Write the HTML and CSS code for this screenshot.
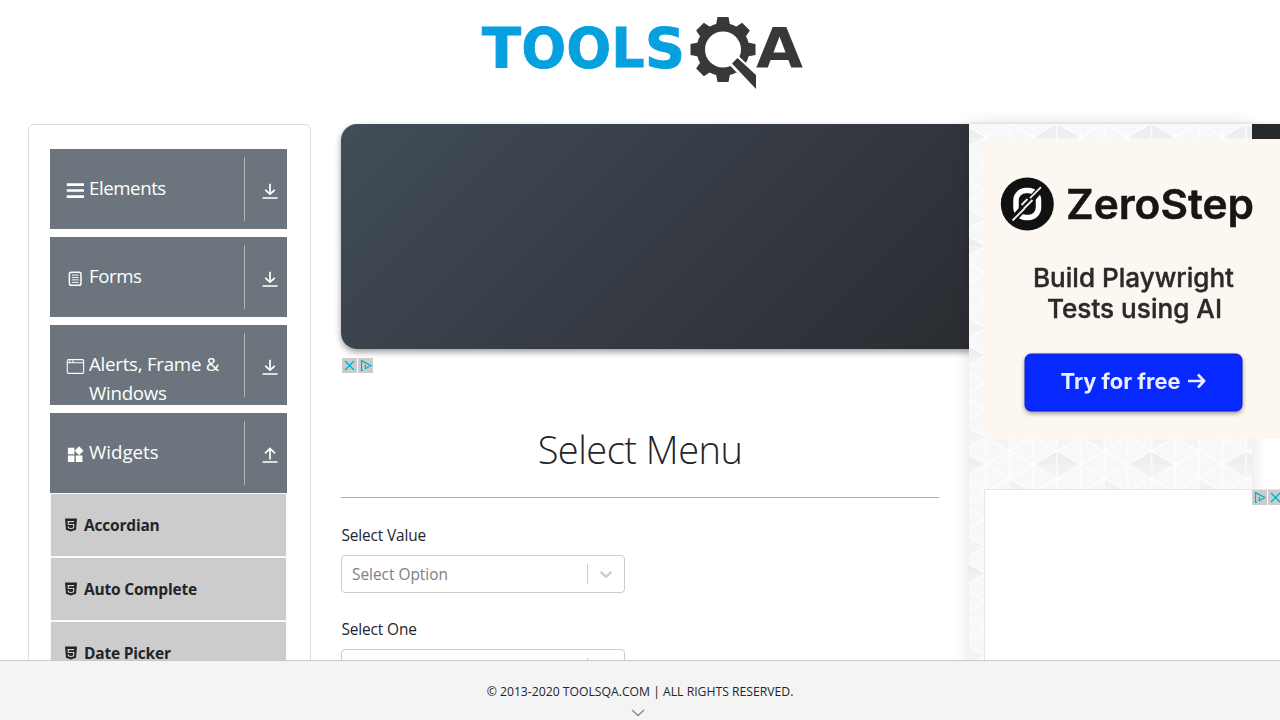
FILE: index.html
```html
<!DOCTYPE html>
<html lang="en">
<head>
<meta charset="utf-8">
<title>ToolsQA - Select Menu</title>
<link rel="stylesheet" href="styles.css">
</head>
<body>
<svg class="defs" width="0" height="0">
  <symbol id="down" viewBox="0 0 16 16"><path d="M8 .8v10M3.200 6.800 8 11.200l4.800-4.400M.5 15h15" fill="none" stroke="currentColor" stroke-width="1.700"/></symbol>
  <symbol id="up" viewBox="0 0 16 16"><path d="M8 12.400V1.500M3 6.400 8 1.500l5 4.900M.5 15h15" fill="none" stroke="currentColor" stroke-width="1.700"/></symbol>
  <symbol id="html5" viewBox="0 0 12 14"><path fill="currentColor" d="M0 .4h12l-1 11.300-5 1.900-5-1.900z"/><path d="M9.200 3.600H3.100l.3 2.900h5.400l-.3 3.400-2.500.8-2.500-.8-.1-1.400" fill="none" stroke="#ccc" stroke-width="1.200"/></symbol>
  <symbol id="adclose" viewBox="0 0 15 15"><path fill="#ccc" d="M0 0h15v15H0z"/><path d="m3 3 9 9M12 3l-9 9" stroke="#00aecd" stroke-width="1.300"/></symbol>
  <symbol id="adinfo" viewBox="0 0 15 15"><path fill="#ccc" d="M0 0h15v15H0z"/><path d="M5 12.300H3.500V2.600l9.300 4.900-6 3.400M7.400 6.700v3.500M7.400 4.500v1.100" fill="none" stroke="#00aecd" stroke-width="1.200"/></symbol>
  <symbol id="chevron" viewBox="0 0 20 20"><path fill="currentColor" d="M4.516 7.548c.436-.446 1.043-.481 1.576 0L10 11.295l3.908-3.747c.533-.481 1.141-.446 1.574 0 .436.445.408 1.197 0 1.615-.406.418-4.695 4.502-4.695 4.502a1.095 1.095 0 0 1-1.576 0S4.924 9.581 4.516 9.163s-.436-1.170 0-1.615z"/></symbol>
</svg>
<div class="page">
  <header class="header">
    <svg class="logo" width="322" height="76" viewBox="481 15 322 76">
      <g class="logo-tools">
        <text y="67"><tspan x="482" textLength="39" lengthAdjust="spacingAndGlyphs">T</tspan><tspan x="521.500" textLength="44.500" lengthAdjust="spacingAndGlyphs">O</tspan><tspan x="566.500" textLength="44.500" lengthAdjust="spacingAndGlyphs">O</tspan><tspan x="611.500" textLength="33" lengthAdjust="spacingAndGlyphs">L</tspan><tspan x="645" textLength="40" lengthAdjust="spacingAndGlyphs">S</tspan></text>
      </g>
      <g fill="#38383a">
        <path id="tooth" d="M717.500 17h11l1.500 8 4 6v37l-4 6-1.500 8h-11l-1.500-8-4-6V31l4-6z"/>
        <use href="#tooth" transform="rotate(45 723 49.500)"/>
        <use href="#tooth" transform="rotate(90 723 49.500)"/>
        <use href="#tooth" transform="rotate(135 723 49.500)"/>
        <circle cx="723" cy="49.500" r="26.500"/>
        <circle cx="723" cy="49.500" r="18" fill="#fff"/>
        <path d="m731.500 63.500 5.500-5.500 19 17.500v13.500z" stroke="#fff" stroke-width="5"/>
        <path d="m732 63.500 5.500-5.500 18.500 17v14z"/>
      </g>
      <text class="logo-a" x="756" y="67" textLength="47" lengthAdjust="spacingAndGlyphs">A</text>
    </svg>
  </header>
  <div class="columns">
    <nav class="sidebar">
      <div class="group"><svg class="gi" viewBox="0 0 18 18"><path d="M.7 3.400h16.300M.7 9h16.300M.7 14.800h16.300" stroke="#fff" stroke-width="2.600"/></svg><span class="label tight">Elements</span><span class="toggle"><svg><use href="#down"/></svg></span></div>
      <div class="group"><svg class="gi" viewBox="0 0 18 18"><rect x="3.200" y="3" width="11" height="12.500" rx="2" fill="none" stroke="#fff" stroke-width="1.400"/><path d="M5.500 5.700h6.500M5.500 8h6.500M5.500 10.300h6.500M5.500 12.700h6.500" stroke="#fff" stroke-width=".9"/></svg><span class="label tight">Forms</span><span class="toggle"><svg><use href="#down"/></svg></span></div>
      <div class="group"><svg class="gi" viewBox="0 0 18 18"><rect x="1.200" y="2.500" width="15.500" height="13" rx="1" fill="none" stroke="#fff"/><path d="M1 5.500h16M3.500 3v2M6.500 3v2" stroke="#fff"/></svg><span class="label">Alerts, Frame &amp; Windows</span><span class="toggle"><svg><use href="#down"/></svg></span></div>
      <div class="group open"><svg class="gi" viewBox="0 0 18 18"><path fill="#fff" d="M1.800 2.500H8V8.700H1.800zM1.800 9.900H8v6.200H1.800zM9.300 9.900h6.300v6.200H9.300zM12.400 1.200l4.200 4.200-4.200 4.200-4.200-4.200z"/></svg><span class="label wide">Widgets</span><span class="toggle"><svg><use href="#up"/></svg></span></div>
      <ul class="items">
        <li><svg><use href="#html5"/></svg><span>Accordian</span></li>
        <li><svg><use href="#html5"/></svg><span>Auto Complete</span></li>
        <li><svg><use href="#html5"/></svg><span>Date Picker</span></li>
      </ul>
    </nav>
    <main class="main">
      <div class="banner"></div>
      <div class="adchoices"><svg><use href="#adclose"/></svg><svg><use href="#adinfo"/></svg></div>
      <h1>Select Menu</h1>
      <label class="field-label">Select Value</label>
      <div class="select"><span class="placeholder">Select Option</span><i></i><svg><use href="#chevron"/></svg></div>
      <label class="field-label">Select One</label>
      <div class="select"><span class="placeholder">Select Title</span><i></i><svg><use href="#chevron"/></svg></div>
    </main>
    <aside class="rail">
      <svg class="texture" width="283" height="600">
        <defs>
          <pattern id="tri" width="47.300" height="27.300" patternUnits="userSpaceOnUse" patternTransform="translate(17 12.900)">
            <path d="M0 0v27.300M23.650 0v27.300M47.300 0v27.300M0 0l47.300 27.300M47.300 0 0 27.300" stroke="#fff" stroke-width="1.100"/>
          </pattern>
          <pattern id="shade" width="94.600" height="109.200" patternUnits="userSpaceOnUse" patternTransform="translate(64.300 340.500)">
            <path fill="#eee" d="m0 0 23.650-13.650v27.300zM23.650-13.650 47.300 0 23.650 13.650zM0 109.200 23.650 95.550v13.650zM23.650 95.550 47.300 109.200H23.650z"/>
            <path fill="#f2f2f2" d="m47.300 54.600 23.650-13.650v27.300zM0 0 23.650 13.650v-13.650zM23.650 0v13.650L47.300 0zM70.950 13.650 94.600 27.300 70.950 40.950z"/>
            <path fill="#f4f4f4" d="m0 27.300 23.650 13.650L0 54.600zM47.300 81.900l23.650-13.650v27.300zM23.650 68.250 47.300 81.900 23.650 95.550z"/>
          </pattern>
        </defs>
        <rect width="283" height="600" fill="#f8f8f8"/><rect width="283" height="600" fill="url(#shade)"/><rect width="283" height="600" fill="url(#tri)"/>
      </svg>
      <svg class="ad" width="300" height="300" viewBox="984 139 300 300">
        <rect x="984" y="139" width="300" height="300" fill="#fdf7f1"/>
        <circle cx="1027.300" cy="204" r="26.500" fill="#111"/>
        <rect x="1016" y="190.500" width="22.500" height="27" rx="10" fill="none" stroke="#fff" stroke-width="5.500"/>
        <path d="m1011 222 33-37" stroke="#111" stroke-width="7"/>
        <path d="m1012.500 220.500 12-12m5.500-10.300 11-11M1024 208.500l8.500-8.500M1021.500 205l6-6" stroke="#eee" stroke-width="1.900"/>
        <g class="ad-text">
          <text class="ad-brand" x="1066" y="219" textLength="188" lengthAdjust="spacingAndGlyphs">ZeroStep</text>
          <text class="ad-copy" x="1033" y="286.500" textLength="201" lengthAdjust="spacingAndGlyphs">Build Playwright</text>
          <text class="ad-copy" x="1047" y="318" textLength="175" lengthAdjust="spacingAndGlyphs">Tests using AI</text>
        </g>
        <rect class="ad-button" x="1025" y="354" width="217" height="57" rx="6"/>
        <text class="ad-cta" x="1060.500" y="389" textLength="120" lengthAdjust="spacingAndGlyphs">Try for free</text>
        <path d="M1188 381h16M1198 374.500l6 6.500-6 6.500" fill="none" stroke="#e8edff" stroke-width="2.700"/>
      </svg>
      <div class="ad-slot"><svg><use href="#adinfo"/></svg><svg><use href="#adclose"/></svg></div>
    </aside>
  </div>
  <footer class="footer">
    <span>© 2013-2020 TOOLSQA.COM | ALL RIGHTS RESERVED.</span>
    <svg width="14" height="8" viewBox="0 0 14 8"><path d="m1 1 6 5.500L13 1" fill="none" stroke="#888" stroke-width="1.300"/></svg>
  </footer>
</div>
</body>
</html>
```
FILE: styles.css
```css
* { box-sizing: border-box; }
body { margin: 0; color: #212529; font-family: "Open Sans", "Noto Sans", sans-serif; }
.defs { position: absolute; }
svg { display: block; flex: none; }
.page { display: flex; flex-direction: column; height: 720px; overflow: hidden; background: #fff; }
.header { height: 124px; flex: none; display: flex; justify-content: center; padding: 15px 0 0 4px; }
.logo { overflow: visible; }
.logo-tools { font: 700 56px "DejaVu Sans", sans-serif; fill: #06a0df; stroke: #06a0df; stroke-width: 1px; }
.logo-a { font: 700 56px "DejaVu Sans", sans-serif; fill: #38383a; }
.columns { height: 536px; flex: none; display: flex; overflow: visible; padding-left: 28px; clip-path: inset(-20px 0 0 0); }
.sidebar { width: 283px; height: 620px; flex: none; border: 1px solid #dcdcdc; border-radius: 6px; padding: 24px 23px 0 21px; }
.group { height: 80px; margin-bottom: 8px; background: #6c757d; color: #fff; display: flex; align-items: flex-start; padding-left: 16px; overflow: hidden; }
.group.open { margin-bottom: 0; }
.gi { width: 19px; height: 19px; margin-top: 32px; }
.label { flex: 1; font-size: 18.700px; line-height: 29px; letter-spacing: -.25px; padding: 24px 0 0 4px; }
.label.tight { letter-spacing: -.45px; }
.label.wide { letter-spacing: 0; }
.toggle { width: 43px; height: 64px; margin-top: 8px; border-left: 1px solid #b6b6b4; padding: 26px 0 0 16.500px; }
.toggle svg { width: 16px; height: 16px; }
.items { list-style: none; margin: 0; padding: 0; }
.items li { height: 64px; background: #ccc; border: 1px solid #f8f9fa; display: flex; align-items: center; gap: 7px; padding-left: 14px; font-size: 15.500px; font-weight: 700; letter-spacing: -.2px; }
.items svg { width: 12px; height: 14px; }
.main { width: 598px; margin-left: 30px; flex: none; }
.banner { width: 970px; height: 225px; border-radius: 16px; background: linear-gradient(135deg, #414d57 0%, #333740 45%, #282a2d 78%, #23262b 100%); box-shadow: 0 3px 6px rgba(0,0,0,.4); }
.adchoices { display: flex; gap: 1px; padding: 9px 0 0 1px; }
.adchoices svg, .ad-slot svg { width: 15px; height: 15px; }
h1 { height: 125px; margin: 0 0 26px; padding-top: 48px; border-bottom: 1px solid #acacac; text-align: center; font-size: 38px; line-height: 56px; font-weight: 300; letter-spacing: -.5px; }
.field-label { display: block; height: 24px; margin-bottom: 7px; padding-left: .5px; font-size: 15.400px; line-height: 24px; letter-spacing: -.13px; }
.select { width: 284px; height: 38px; margin-bottom: 25px; border: 1px solid #ccc; border-radius: 4px; display: flex; align-items: center; }
.placeholder { flex: 1; padding-left: 10px; color: gray; font-size: 15.400px; letter-spacing: 0; }
.select i { width: 1px; height: 20px; background: #ccc; }
.select svg { width: 20px; height: 20px; margin: 0 8px; color: #ccc; }
.rail { position: relative; width: 283px; height: 620px; margin-left: 30px; flex: none; padding: 15px 0 0 15px; background: #f8f8f8; box-shadow: 0 0 16px rgba(0,0,0,.12); }
.texture { position: absolute; inset: 0; }
.ad { position: relative; filter: blur(.35px); }
.ad-text { fill: #161616; }
.ad-brand { font: 600 41.500px Inter, sans-serif; stroke: #161616; stroke-width: .5px; }
.ad-copy { font: 500 26px Inter, sans-serif; fill: #2a2a2a; stroke: #2a2a2a; stroke-width: .4px; }
.ad-button { fill: #0728ff; stroke: #1520cc; filter: drop-shadow(0 2px 2px rgba(0,0,0,.4)); }
.ad-cta { font: 700 21.500px Inter, sans-serif; fill: #e8edff; }
.ad-slot { position: relative; width: 302px; height: 252px; margin-top: 50px; border: 1px solid #e5e5e5; background: #fff; display: flex; gap: 1px; padding-left: 267px; }
.footer { height: 60px; flex: none; position: relative; background: #f4f4f4; border-top: 1px solid #c8c8c8; display: flex; flex-direction: column; align-items: center; padding-top: 21px; font-size: 12.200px; line-height: 20px; letter-spacing: 0; }
.footer svg { margin: 7px 4px 0 0; }
```
